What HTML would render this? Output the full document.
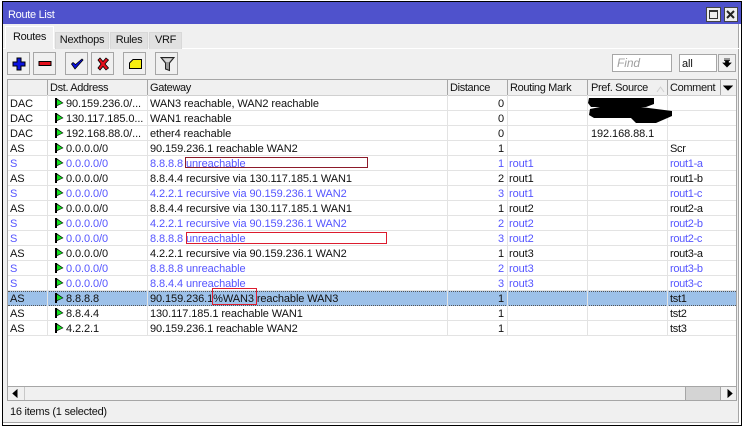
<!DOCTYPE html>
<html><head><meta charset="utf-8"><style>
html,body{margin:0;padding:0;background:#fff}
#p{position:relative;width:744px;height:426px;overflow:hidden;background:#fff;font:11px/15px "Liberation Sans",sans-serif;color:#111;letter-spacing:-.09px}
#p div,#p span,#p svg{position:absolute;white-space:nowrap}
.k{background:#000}
.b{background:#f0f0f0;border:1px solid #a6a6a6;box-sizing:border-box;top:52px;height:23px;width:23px}
.t{top:32px;height:17px;background:#e1e1e1;border:1px solid #d8d8d8;border-bottom:0;box-sizing:border-box;line-height:15px;text-align:center}
.h{top:80px;height:15px;line-height:17px;color:#111;letter-spacing:-.35px}
.r{left:8px;width:728px;height:14px;border-bottom:1px solid #e3e3e3;box-sizing:content-box}
.r span{top:1px}
.s{color:#5555ff}
.a{left:2px}.d{left:58px}.g{left:142px}.n{left:440px;width:56px;text-align:right}.m{left:501px}.f{left:583px}.c{left:662px;letter-spacing:-.3px}
.v{top:79px;width:1px;height:257px;background:#e3e3e3}
.q{top:79px;width:1px;height:16px;background:#a6a6a6}
.x{background:none;box-sizing:border-box;border:1px solid #dc1c2e}
</style></head><body><div id="p">
<div class="k" style="left:2px;top:1px;width:740px;height:1px"></div>
<div class="k" style="left:2px;top:1px;width:1px;height:425px"></div>
<div class="k" style="left:741px;top:1px;width:1px;height:425px"></div>
<div class="k" style="left:2px;top:425px;width:740px;height:1px"></div>
<div style="left:3px;top:2px;width:738px;height:423px;background:#f0f0f0"></div>
<div style="left:3px;top:2px;width:738px;height:22px;background:#4f52cc"></div>
<div style="left:8px;top:8px;color:#fff;line-height:15px;font-size:11px;letter-spacing:-.3px">Route List</div>
<div style="left:706px;top:7px;width:15px;height:15px;background:#eee;border:1px solid #444;box-sizing:border-box"></div>
<div style="left:709px;top:10px;width:9px;height:9px;border:1px solid #333;border-top-width:2px;box-sizing:border-box"></div>
<div style="left:724px;top:7px;width:14px;height:15px;background:#eee;border:1px solid #444;box-sizing:border-box"></div>
<svg style="left:726px;top:10px" width="9" height="9"><path d="M1 1L8 8M8 1L1 8" stroke="#222" stroke-width="2"/></svg>
<div style="left:738px;top:24px;width:1px;height:399px;background:#a6a6a6"></div>
<div style="left:739px;top:24px;width:2px;height:401px;background:#fff"></div>
<div style="left:3px;top:422px;width:736px;height:1px;background:#a6a6a6"></div>
<div style="left:3px;top:423px;width:738px;height:2px;background:#fff"></div>

<div style="left:3px;top:48px;width:736px;height:1px;background:#fff"></div>
<div style="left:5px;top:26px;width:49px;height:23px;background:#f0f0f0;border:1px solid #fff;border-bottom:0;box-sizing:border-box;line-height:20px;text-align:center;letter-spacing:-.3px">Routes</div>
<div class="t" style="left:55px;width:54px;letter-spacing:-.25px">Nexthops</div>
<div class="t" style="left:110px;width:38px;letter-spacing:-.3px">Rules</div>
<div class="t" style="left:149px;width:33px;letter-spacing:-.3px">VRF</div>

<div class="b" style="left:7px"></div>
<svg style="left:12px;top:57px" width="14" height="14"><path d="M5 1H9V5H13V9H9V13H5V9H1V5H5Z" fill="#0a12e0" stroke="#000"/></svg>
<div class="b" style="left:33px"></div>
<svg style="left:38px;top:59px" width="14" height="10"><rect x="1" y="2.5" width="12" height="4" fill="#e4101c" stroke="#000"/></svg>
<div class="b" style="left:65px"></div>
<svg style="left:70px;top:57px" width="14" height="14"><path d="M1.5 7L5 12L13 3L12 2L5.5 7.5L3 5.5Z" fill="#0a12e0" stroke="#000" stroke-width=".8"/></svg>
<div class="b" style="left:91px"></div>
<svg style="left:96px;top:57px" width="14" height="14"><path d="M2 3L4 1L7 4.5L10 1L12.5 3L9 7L12.5 11L10 13L7 9.5L4 13L2 11L5 7Z" fill="#e4101c" stroke="#000" stroke-width=".8"/></svg>
<div class="b" style="left:123px"></div>
<svg style="left:128px;top:58px" width="15" height="12"><path d="M1.5 5L5 1.5H13.5V10.5H1.5Z" fill="#f6ee10" stroke="#000"/></svg>
<div class="b" style="left:155px"></div>
<svg style="left:160px;top:56px" width="15" height="16"><path d="M1 1.5H14L9.5 7V14.5L5.5 13V7Z" fill="#9a9a9a" stroke="#222"/><path d="M3 2.5H12L9 6H6Z" fill="#d8d8d8"/></svg>

<div style="left:612px;top:54px;width:60px;height:18px;background:#fff;border:1px solid #a6a6a6;box-sizing:border-box;line-height:16px;padding-left:4px;color:#a0a0a0;font-style:italic;font-size:12px">Find</div>
<div style="left:679px;top:54px;width:38px;height:18px;background:#fff;border:1px solid #a6a6a6;box-sizing:border-box;line-height:18px;padding-left:2px">all</div>
<div style="left:718px;top:54px;width:18px;height:18px;background:#f0f0f0;border:1px solid #a6a6a6;box-sizing:border-box"></div>
<svg style="left:722px;top:58px" width="10" height="10"><path d="M2 1H8M2 2.5H8M3.5 3V5H1L5 9L9 5H6.500V3Z" fill="#000" stroke="#000" stroke-width=".7"/></svg>

<div style="left:7px;top:79px;width:730px;height:308px;background:#fff;box-sizing:border-box;border:1px solid #a6a6a6;border-bottom:0"></div>
<div style="left:8px;top:80px;width:728px;height:15px;background:#f0f0f0"></div>
<div style="left:8px;top:95px;width:728px;height:1px;background:#d0d0d0"></div>
<div class="h" style="left:50px">Dst. Address</div>
<div class="h" style="left:150px">Gateway</div>
<div class="h" style="left:450px">Distance</div>
<div class="h" style="left:510px">Routing Mark</div>
<div class="h" style="left:591px">Pref. Source</div>
<svg style="left:656px;top:85px" width="9" height="8"><path d="M1 7L4.500 2L8 7" fill="none" stroke="#d0d0d0"/></svg>
<div class="h" style="left:670px">Comment</div>
<svg style="left:723px;top:84px" width="10" height="8"><path d="M1 2H9L5 6Z" fill="#000" stroke="#000"/></svg>

<div class="r" style="top:96px"><span class="a">DAC</span><span class="d">90.159.236.0/...</span><span class="g">WAN3 reachable, WAN2 reachable</span><span class="n">0</span></div>
<div class="r" style="top:111px"><span class="a">DAC</span><span class="d">130.117.185.0...</span><span class="g">WAN1 reachable</span><span class="n">0</span></div>
<div class="r" style="top:126px"><span class="a">DAC</span><span class="d">192.168.88.0/...</span><span class="g">ether4 reachable</span><span class="n">0</span><span class="f">192.168.88.1</span></div>
<div class="r" style="top:141px"><span class="a">AS</span><span class="d">0.0.0.0/0</span><span class="g">90.159.236.1 reachable WAN2</span><span class="n">1</span><span class="c">Scr</span></div>
<div class="r s" style="top:156px"><span class="a">S</span><span class="d">0.0.0.0/0</span><span class="g">8.8.8.8 unreachable</span><span class="n">1</span><span class="m">rout1</span><span class="c">rout1-a</span></div>
<div class="r" style="top:171px"><span class="a">AS</span><span class="d">0.0.0.0/0</span><span class="g">8.8.4.4 recursive via 130.117.185.1 WAN1</span><span class="n">2</span><span class="m">rout1</span><span class="c">rout1-b</span></div>
<div class="r s" style="top:186px"><span class="a">S</span><span class="d">0.0.0.0/0</span><span class="g">4.2.2.1 recursive via 90.159.236.1 WAN2</span><span class="n">3</span><span class="m">rout1</span><span class="c">rout1-c</span></div>
<div class="r" style="top:201px"><span class="a">AS</span><span class="d">0.0.0.0/0</span><span class="g">8.8.4.4 recursive via 130.117.185.1 WAN1</span><span class="n">1</span><span class="m">rout2</span><span class="c">rout2-a</span></div>
<div class="r s" style="top:216px"><span class="a">S</span><span class="d">0.0.0.0/0</span><span class="g">4.2.2.1 recursive via 90.159.236.1 WAN2</span><span class="n">2</span><span class="m">rout2</span><span class="c">rout2-b</span></div>
<div class="r s" style="top:231px"><span class="a">S</span><span class="d">0.0.0.0/0</span><span class="g">8.8.8.8 unreachable</span><span class="n">3</span><span class="m">rout2</span><span class="c">rout2-c</span></div>
<div class="r" style="top:246px"><span class="a">AS</span><span class="d">0.0.0.0/0</span><span class="g">4.2.2.1 recursive via 90.159.236.1 WAN2</span><span class="n">1</span><span class="m">rout3</span><span class="c">rout3-a</span></div>
<div class="r s" style="top:261px"><span class="a">S</span><span class="d">0.0.0.0/0</span><span class="g">8.8.8.8 unreachable</span><span class="n">2</span><span class="m">rout3</span><span class="c">rout3-b</span></div>
<div class="r s" style="top:276px"><span class="a">S</span><span class="d">0.0.0.0/0</span><span class="g">8.8.4.4 unreachable</span><span class="n">3</span><span class="m">rout3</span><span class="c">rout3-c</span></div>
<div class="r" style="top:291px;background:#9dc1e9;border-top:1px dotted #555;border-bottom:1px dotted #555;height:13px"><span class="a" style="top:0">AS</span><span class="d" style="top:0">8.8.8.8</span><span class="g" style="top:0">90.159.236.1%WAN3 reachable WAN3</span><span class="n" style="top:0">1</span><span class="c" style="top:0">tst1</span></div>
<div class="r" style="top:306px"><span class="a">AS</span><span class="d">8.8.4.4</span><span class="g">130.117.185.1 reachable WAN1</span><span class="n">1</span><span class="c">tst2</span></div>
<div class="r" style="top:321px"><span class="a">AS</span><span class="d">4.2.2.1</span><span class="g">90.159.236.1 reachable WAN2</span><span class="n">1</span><span class="c">tst3</span></div>

<div class="v" style="left:47px"></div><div class="v" style="left:147px"></div><div class="v" style="left:447px"></div><div class="v" style="left:507px"></div><div class="v" style="left:587px"></div><div class="v" style="left:667px"></div>
<div class="q" style="left:47px"></div><div class="q" style="left:147px"></div><div class="q" style="left:447px"></div><div class="q" style="left:507px"></div><div class="q" style="left:587px"></div><div class="q" style="left:667px"></div><div class="q" style="left:720px"></div>

<svg style="left:54px;top:96px" width="12" height="240">
<defs><g id="fl"><path d="M1 2h2v10h-2z" fill="#000"/><path d="M3 2.500L9.500 7L3 10Z" fill="#000"/><path d="M3 3.500L8.500 7L3 9.300Z" fill="#14e020"/></g></defs>
<use href="#fl"/><use href="#fl" y="15"/><use href="#fl" y="30"/><use href="#fl" y="45"/>
<use href="#fl" y="60"/><use href="#fl" y="75"/><use href="#fl" y="90"/><use href="#fl" y="105"/>
<use href="#fl" y="120"/><use href="#fl" y="135"/><use href="#fl" y="150"/><use href="#fl" y="165"/>
<use href="#fl" y="180"/><use href="#fl" y="195"/><use href="#fl" y="210"/><use href="#fl" y="225"/>
</svg>

<svg style="left:586px;top:96px" width="92" height="30"><path d="M3 2H68V8L60 11H5L2 7Z" fill="#000"/><path d="M4 13L14 11H55L86 15V20L70 27H50L45 22H8L3 19Z" fill="#000"/></svg>

<div class="x" style="left:185px;top:157px;width:183px;height:11px;border-color:#8c1a2a"></div>
<div class="x" style="left:186px;top:232px;width:201px;height:12px"></div>
<div class="x" style="left:212px;top:288px;width:45px;height:17px"></div>

<div style="left:7px;top:386px;width:730px;height:1px;background:#a6a6a6"></div>
<div style="left:7px;top:387px;width:1px;height:14px;background:#a6a6a6"></div>
<div style="left:736px;top:387px;width:1px;height:14px;background:#a6a6a6"></div>
<div style="left:8px;top:387px;width:728px;height:13px;background:#f0f0f0"></div>
<div style="left:685px;top:387px;width:35px;height:13px;background:#d4d4d4;border-left:1px solid #a6a6a6"></div>
<div style="left:24px;top:387px;width:1px;height:13px;background:#c8c8c8"></div>
<div style="left:720px;top:387px;width:1px;height:13px;background:#a6a6a6"></div>
<svg style="left:12px;top:389px" width="8" height="9"><path d="M1 4.500L5 1V8Z" fill="#000" stroke="#000"/></svg>
<svg style="left:725px;top:389px" width="8" height="9"><path d="M7 4.500L3 1V8Z" fill="#000" stroke="#000"/></svg>
<div style="left:7px;top:400px;width:730px;height:1px;background:#a6a6a6"></div>
<div style="left:10px;top:405px;letter-spacing:-.25px">16 items (1 selected)</div>
</div></body></html>
